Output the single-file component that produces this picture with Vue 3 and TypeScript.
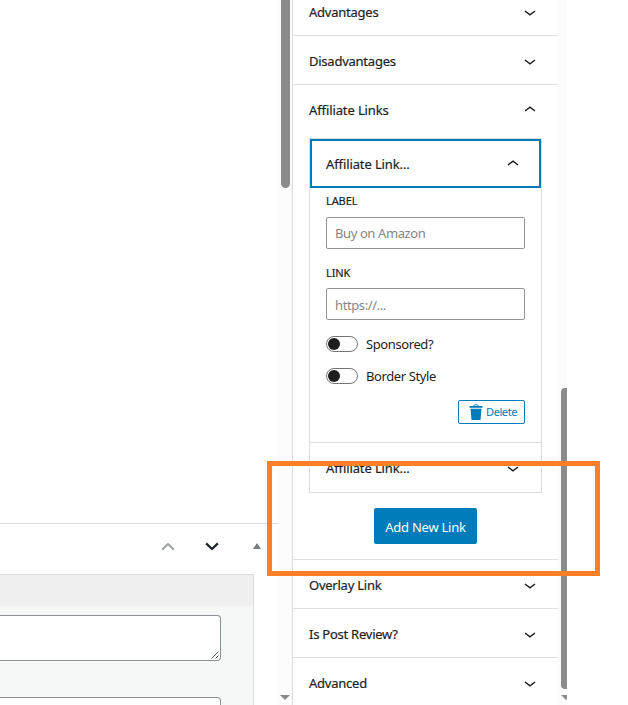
<script setup lang="ts">
import { ref } from 'vue'

interface Toggle {
  label: string
  on: boolean
}

const before = ['Advantages', 'Disadvantages']
const after = ['Overlay Link', 'Is Post Review?', 'Advanced']
const label = ref('')
const link = ref('')
const toggles = ref<Toggle[]>([
  { label: 'Sponsored?', on: false },
  { label: 'Border Style', on: false },
])
</script>

<template>
  <div class="screen">
    <main class="editor">
      <div class="canvas"></div>
      <section class="metabox">
        <header class="metabox-actions">
          <svg class="order" viewBox="0 0 14 9"><path d="M1.2 7.6 7 2l5.800 5.600" stroke="#a7aaad" /></svg>
          <svg class="order" viewBox="0 0 14 9"><path d="M1.200 1.400 7 7l5.800-5.600" stroke="#1d2327" /></svg>
          <svg class="collapse" viewBox="0 0 8 6"><path d="M4 0 8 6H0z" fill="#787c82" /></svg>
        </header>
        <div class="fields">
          <div class="fields-head"></div>
          <div class="area">
            <svg class="grip" viewBox="0 0 8 8"><path d="M.5 7.500l7-7M4.500 7.500l3-3" /></svg>
          </div>
          <div class="area"></div>
        </div>
      </section>
    </main>

    <div class="track main-track">
      <div class="thumb"></div>
      <svg class="arrow" viewBox="0 0 10 5"><path d="M0 0h10L5 5z" fill="#8a8a8a" /></svg>
    </div>

    <aside class="sidebar">
      <div v-for="name in before" :key="name" class="row">
        <span>{{ name }}</span>
        <svg class="chev" viewBox="0 0 12 6"><path d="M1 1 6 4.800 11 1" /></svg>
      </div>

      <section class="panel">
        <div class="row open">
          <span>Affiliate Links</span>
          <svg class="chev up" viewBox="0 0 12 6"><path d="M1 5 6 1.200 11 5" /></svg>
        </div>
        <div class="repeater">
          <div class="item-head focused">
            <span>Affiliate Link...</span>
            <svg class="chev up" viewBox="0 0 12 6"><path d="M1 5 6 1.200 11 5" /></svg>
          </div>
          <div class="item-body">
            <label class="caption" for="label">LABEL</label>
            <input id="label" v-model="label" type="text" placeholder="Buy on Amazon" />
            <label class="caption second" for="link">LINK</label>
            <input id="link" v-model="link" type="text" placeholder="https://..." />
            <div v-for="t in toggles" :key="t.label" class="toggle" @click="t.on = !t.on">
              <span class="switch" :class="{ on: t.on }"><i></i></span>
              <span>{{ t.label }}</span>
            </div>
            <button class="delete" type="button">
              <svg viewBox="0 0 14 16">
                <path d="M4.500 2C4.800.3 9.200.3 9.500 2" fill="none" stroke="#007cba" />
                <path d="M.5 2h13v1.800H.5zM1.500 4.800h11l-1 11.200h-9z" fill="#007cba" />
              </svg>
              <span>Delete</span>
            </button>
          </div>
          <div class="item-head next">
            <span>Affiliate Link...</span>
            <svg class="chev" viewBox="0 0 12 6"><path d="M1 1 6 4.800 11 1" /></svg>
          </div>
        </div>
        <button class="add" type="button">Add New Link</button>
      </section>

      <div v-for="name in after" :key="name" class="row">
        <span>{{ name }}</span>
        <svg class="chev" viewBox="0 0 12 6"><path d="M1 1 6 4.800 11 1" /></svg>
      </div>
    </aside>

    <div class="track side-track">
      <div class="thumb"></div>
      <svg class="arrow" viewBox="0 0 10 5"><path d="M0 0h10L5 5z" fill="#8a8a8a" /></svg>
    </div>

    <div class="highlight"></div>
  </div>
</template>

<style>
body {
  background: #fff;
  overflow: hidden;
}
</style>

<style scoped>
* {
  box-sizing: border-box;
}
.screen {
  position: relative;
  display: flex;
  width: 628px;
  height: 705px;
  overflow: hidden;
  background: #fff;
  color: #1e1e1e;
  font: 13px/20px 'Noto Sans', 'Open Sans', sans-serif;
  letter-spacing: -0.4px;
}
svg {
  display: block;
  flex: none;
}
.editor {
  display: flex;
  flex-direction: column;
  width: 278px;
}
.canvas {
  height: 523px;
}
.metabox {
  height: 182px;
  overflow: hidden;
  border-top: 1px solid #dcdcde;
}
.metabox-actions {
  display: flex;
  align-items: center;
  justify-content: flex-end;
  height: 50px;
  padding: 0 17.500px 6px 0;
}
.order {
  width: 14px;
  height: 9px;
  margin-right: 30px;
}
.order + .order {
  margin-right: 33.500px;
}
.order path {
  fill: none;
  stroke-width: 2.200;
}
.collapse {
  width: 8px;
  height: 6px;
  margin-bottom: 1px;
}
.fields {
  width: 254px;
  height: 200px;
  border: solid #dcdcde;
  border-width: 1px 1px 0 0;
  background: #f6f8f8;
}
.fields-head {
  height: 31px;
  margin-bottom: 9px;
  background: #efefef;
}
.area {
  display: flex;
  align-items: flex-end;
  justify-content: flex-end;
  width: 221px;
  height: 46px;
  margin-bottom: 36px;
  padding: 1px;
  border: 1px solid #8c8f94;
  border-left: 0;
  border-radius: 0 4px 4px 0;
  background: #fff;
}
.grip {
  width: 8px;
  height: 8px;
}
.grip path {
  fill: none;
  stroke: #50575e;
  stroke-width: 0.900;
}
.track {
  display: flex;
  flex-direction: column;
  justify-content: space-between;
  overflow: hidden;
  background: #fcfcfc;
}
.thumb {
  flex: none;
  background: #8b8b8b;
}
.arrow {
  width: 10px;
  height: 5px;
  margin-bottom: 5px;
}
.main-track {
  width: 14px;
  padding-left: 2px;
}
.main-track .thumb {
  width: 9px;
  height: 188px;
  margin-left: 1px;
  border-radius: 0 0 5px 5px;
}
.side-track {
  width: 9px;
  padding-left: 3px;
}
.side-track .thumb {
  width: 9px;
  height: 301px;
  margin-top: 388px;
  border-radius: 4px;
}
.sidebar {
  display: flex;
  flex-direction: column;
  width: 266px;
  height: 718px;
  margin-top: -13px;
  border-left: 1px solid #dcdcdc;
}
.row {
  display: flex;
  flex: none;
  align-items: center;
  justify-content: space-between;
  height: 49px;
  padding: 2px 22px 0 16px;
  border-bottom: 1px solid #e0e0e0;
  letter-spacing: -0.24px;
  -webkit-text-stroke: 0.2px #1e1e1e;
}
.row.open,
.row:last-child {
  padding-top: 1px;
  border-bottom: 0;
}
.row.open,
.item-head {
  letter-spacing: -0.11px;
}
.chev {
  width: 12px;
  height: 6px;
  margin-top: 2px;
}
.chev.up {
  margin-top: 0;
  margin-bottom: 2px;
}
.chev path {
  fill: none;
  stroke: #1e1e1e;
  stroke-width: 1.500;
}
.panel {
  display: flex;
  flex: none;
  flex-direction: column;
  align-items: center;
  height: 475px;
  border-bottom: 1px solid #e0e0e0;
}
.panel > .row {
  width: 100%;
}
.repeater {
  width: 233px;
  height: 355px;
  margin-top: 4px;
  border: 1px solid #dcdcdc;
}
.item-head {
  display: flex;
  align-items: center;
  justify-content: space-between;
  height: 49px;
  padding: 1px 20px 0 14px;
  -webkit-text-stroke: 0.2px #1e1e1e;
}
.focused {
  border: 2px solid #007cba;
}
.next {
  height: 50px;
  padding: 1px 22px 0 16px;
  border-top: 1px solid #dcdcdc;
}
.item-body {
  display: flex;
  flex-direction: column;
  height: 254px;
  padding: 3px 16px 0;
}
.caption {
  height: 20px;
  font-size: 11px;
  letter-spacing: -0.1px;
  -webkit-text-stroke: 0.2px #1e1e1e;
}
input {
  width: 100%;
  height: 32px;
  margin: 6px 0 0;
  padding: 0 8px;
  border: 1px solid #949494;
  border-radius: 2px;
  outline: 0;
  background: #fff;
  font: 13px 'Noto Sans', 'Open Sans', sans-serif;
  letter-spacing: -0.4px;
}
input::placeholder {
  color: #858585;
}
.second {
  margin-top: 14px;
}
.second + input {
  margin: 5px 0 14px;
  padding-top: 1px;
}
.toggle {
  display: flex;
  align-items: center;
  gap: 8px;
  height: 20px;
  margin-bottom: 12px;
}
.switch {
  width: 32px;
  height: 16px;
  padding: 1px;
  border: 1px solid #757575;
  border-radius: 8px;
}
.switch i {
  display: block;
  width: 12px;
  height: 12px;
  border-radius: 50%;
  background: #1e1e1e;
}
.switch.on i {
  margin-left: 16px;
}
.delete {
  display: flex;
  align-items: center;
  align-self: flex-end;
  gap: 3px;
  width: 67px;
  height: 24px;
  margin-top: 2px;
  padding: 0 0 0 10px;
  border: 1px solid #007cba;
  border-radius: 2px;
  background: #fff;
  color: #007cba;
  font: 11px 'Noto Sans', 'Open Sans', sans-serif;
  letter-spacing: -0.4px;
}
.delete svg {
  width: 14px;
  height: 16px;
}
.delete span {
  margin-top: -1px;
}
.add {
  width: 103px;
  height: 36px;
  margin-top: 15px;
  padding: 2px 0 0;
  border: 0;
  border-radius: 2px;
  background: #007cba;
  color: #fff;
  font: 13px 'Noto Sans', 'Open Sans', sans-serif;
  letter-spacing: -0.25px;
}
.highlight {
  position: absolute;
  top: 461px;
  left: 267px;
  width: 333px;
  height: 115px;
  border: 5px solid #ff7f27;
  pointer-events: none;
}
</style>
